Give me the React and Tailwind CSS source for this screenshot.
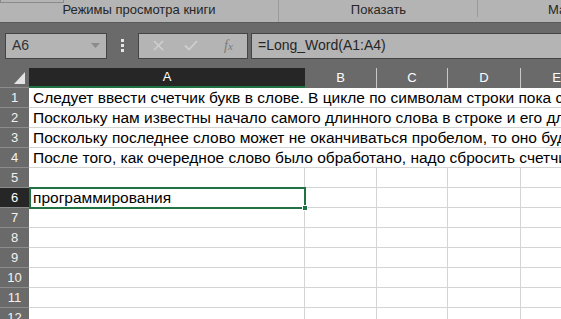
import React from 'react';

const cols = [
    { id: 'B', w: 'w-[72px]' },
    { id: 'C', w: 'w-[71px]' },
    { id: 'D', w: 'w-[73px]' },
    { id: 'E', w: 'w-[72px]' },
];

const lines = [
    'Следует ввести счетчик букв в слове. В цикле по символам строки пока слово не закончилось, увеличиваем счетчик',
    'Поскольку нам известны начало самого длинного слова в строке и его длина, можно вырезать это слово',
    'Поскольку последнее слово может не оканчиваться пробелом, то оно будет проверено после цикла',
    'После того, как очередное слово было обработано, надо сбросить счетчик букв в ноль',
];

function RowHead({ n, active }) {
    return (
        <div className={`w-[29px] shrink-0 h-full flex items-center justify-center text-[13px] border-b border-[#8c8c8c] ${active ? 'bg-[#262626] text-white' : 'bg-[#6a6a6a] text-[#f2f2f2]'}`}>
            {n}
        </div>
    );
}

function TextRow({ n, text }) {
    return (
        <div className="flex h-[20px]">
            <RowHead n={n} />
            <div className="flex-1 border-b border-[#d4d4d4] bg-white overflow-hidden whitespace-nowrap pl-[4px] text-[15.5px] leading-[19px] text-black">
                {text}
            </div>
        </div>
    );
}

function GridRow({ n, active, value }) {
    return (
        <div className="flex h-[20px]">
            <RowHead n={n} active={active} />
            <div className="w-[276px] shrink-0 relative border-r border-b border-[#d4d4d4] bg-white">
                {active && (
                    <div className="absolute left-0 top-[-1px] w-[277px] h-[22px] border-2 border-[#217346] z-10 pl-[2px] text-[15.5px] leading-[17px] text-black whitespace-nowrap">
                        {value}
                        <div className="absolute right-[-4px] bottom-[-4px] w-[6px] h-[6px] bg-[#217346] border border-white" />
                    </div>
                )}
            </div>
            {cols.map((c) => (
                <div key={c.id} className={`${c.w} shrink-0 border-r border-b border-[#d4d4d4] bg-white`} />
            ))}
            <div className="flex-1 border-b border-[#d4d4d4] bg-white" />
        </div>
    );
}

export default function App() {
    return (
        <div className="w-[561px] h-[319px] overflow-hidden bg-white" style={{ fontFamily: '"Liberation Sans", Arial, sans-serif' }}>
            {/* Ribbon group labels */}
            <div className="h-[22px] bg-[#b4b4b4] flex text-[13px] text-[#262626] relative">
                <div className="absolute left-0 top-0 w-[64px] h-[3px] border border-t-0 border-[#8a8a8a]" />
                <div className="w-[279px] shrink-0 flex items-end justify-center pb-[3px] border-r border-[#9a9a9a]">Режимы просмотра книги</div>
                <div className="w-[199px] shrink-0 flex items-end justify-center pb-[3px] relative">
                    Показать
                    <div className="absolute right-0 top-0 h-[17px] w-px bg-[#9a9a9a]" />
                </div>
                <div className="flex-1 flex items-end pb-[3px] pl-[70px]">Ма</div>
            </div>

            {/* Formula bar */}
            <div className="h-[46px] bg-[#6a6a6a] border-t border-[#5a5a5a] flex items-center pl-[5px]">
                <div className="w-[102px] h-[26px] bg-[#b4b4b4] border border-[#444] flex items-center justify-between pl-[6px] pr-[6px] text-[14px] text-[#333]">
                    <span>A6</span>
                    <svg width="9" height="5" viewBox="0 0 9 5"><path d="M0 0h9L4.5 5z" fill="#8c8c8c" /></svg>
                </div>
                <div className="w-[31px] flex flex-col items-center gap-[2px]">
                    <div className="w-[3px] h-[3px] bg-[#e6e6e6]" />
                    <div className="w-[3px] h-[3px] bg-[#e6e6e6]" />
                    <div className="w-[3px] h-[3px] bg-[#e6e6e6]" />
                </div>
                <div className="w-[110px] h-[26px] bg-[#b4b4b4] border border-[#444] flex items-center">
                    <svg className="ml-[14px]" width="11" height="11" viewBox="0 0 11 11"><path d="M1 1l9 9M10 1l-9 9" stroke="#cfcfcf" strokeWidth="1.6" /></svg>
                    <svg className="ml-[20px]" width="14" height="11" viewBox="0 0 14 11"><path d="M1 5.5l4 4L13 1" stroke="#cfcfcf" strokeWidth="1.8" fill="none" /></svg>
                    <span className="ml-[26px] text-[14px] italic text-[#7a7a7a]" style={{ fontFamily: '"Liberation Serif", serif' }}>f<span className="text-[11px]">x</span></span>
                </div>
                <div className="ml-[3px] flex-1 h-[26px] bg-[#b4b4b4] border border-r-0 border-[#444] flex items-center pl-[6px] text-[14px] text-[#262626]">
                    =Long_Word(A1:A4)
                </div>
            </div>

            {/* Column headers */}
            <div className="flex h-[20px] text-[13px] text-white">
                <div className="w-[29px] shrink-0 bg-[#6a6a6a] relative border-b border-[#8c8c8c]">
                    <svg className="absolute right-[4px] bottom-[3px]" width="11" height="12" viewBox="0 0 11 12"><path d="M11 0v12H0z" fill="#e3e3e3" /></svg>
                </div>
                <div className="w-[276px] shrink-0 bg-[#262626] border-b-2 border-[#217346] flex items-center justify-center">A</div>
                {cols.map((c) => (
                    <div key={c.id} className={`${c.w} shrink-0 bg-[#6a6a6a] border-r border-[#c8c8c8] flex items-center justify-center`}>{c.id}</div>
                ))}
                <div className="flex-1 bg-[#6a6a6a]" />
            </div>

            {/* Rows */}
            {lines.map((t, i) => (
                <TextRow key={i} n={i + 1} text={t} />
            ))}
            <GridRow n={5} />
            <GridRow n={6} active value="программирования" />
            {[7, 8, 9, 10, 11, 12].map((n) => (
                <GridRow key={n} n={n} />
            ))}
        </div>
    );
}
